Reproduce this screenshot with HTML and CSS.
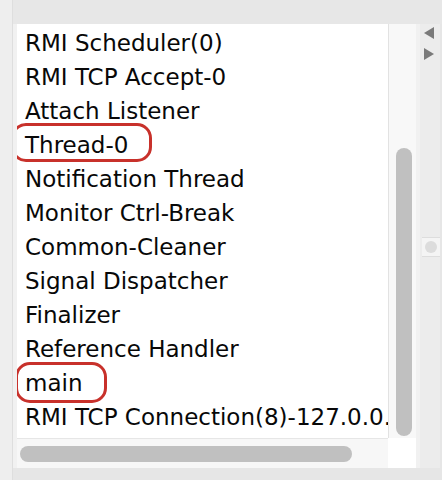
FILE: index.html
```html
<!DOCTYPE html>
<html>
<head>
<meta charset="utf-8">
<link rel="stylesheet" href="styles.css">
</head>
<body>
<div class="window">
  <div class="side"></div>
  <div class="main">
    <div class="topbar"></div>
    <div class="content">
      <div class="pane">
        <div class="viewport">
          <ul class="list">
            <li>RMI Scheduler(0)</li>
            <li>RMI TCP Accept-0</li>
            <li>Attach Listener</li>
            <li><span class="mark mark-thread">Thread-0</span></li>
            <li>Notification Thread</li>
            <li>Monitor Ctrl-Break</li>
            <li>Common-Cleaner</li>
            <li>Signal Dispatcher</li>
            <li>Finalizer</li>
            <li>Reference Handler</li>
            <li><span class="mark mark-main">main</span></li>
            <li>RMI TCP Connection(8)-127.0.0.1</li>
          </ul>
        </div>
        <div class="vbar"><div class="vthumb"></div></div>
        <div class="hbar"><div class="hthumb"></div></div>
        <div class="corner"></div>
      </div>
      <div class="rightcol">
        <div class="arrows">
          <svg width="12" height="14" viewBox="0 0 12 14"><polygon points="11,1 11,13 1,7" fill="#7a7a7a"/></svg>
          <svg width="12" height="14" viewBox="0 0 12 14"><polygon points="1,1 1,13 11,7" fill="#7a7a7a"/></svg>
        </div>
        <div class="knob"><span class="dot"></span></div>
      </div>
      <div class="edge"></div>
    </div>
    <div class="bottombar"></div>
  </div>
</div>
</body>
</html>
```
FILE: styles.css
```css
html, body {
  margin: 0;
  padding: 0;
}
body {
  width: 442px;
  height: 480px;
  overflow: hidden;
  background: #e8e8e8;
  font-family: "DejaVu Sans", "Liberation Sans", sans-serif;
}
.window {
  display: flex;
  width: 442px;
  height: 480px;
}
.side {
  width: 12px;
  background: #eeeeee;
  border-right: 1px solid #dedede;
  flex: none;
}
.main {
  flex: 1;
  display: flex;
  flex-direction: column;
}
.topbar {
  height: 24px;
  background: #e7e7e7;
  flex: none;
}
.content {
  display: flex;
  height: 444px;
  flex: none;
}
.pane {
  display: grid;
  grid-template-columns: 371px 28px;
  grid-template-rows: 414px 30px;
  padding-left: 4px;
  background: #f1f1f1;
  width: 403px;
  flex: none;
}
.viewport {
  background: #ffffff;
  overflow: hidden;
}
.list {
  list-style: none;
  margin: 0;
  padding: 2px 0 0 8px;
  white-space: nowrap;
  font-size: 23px;
  color: #080808;
}
.list li {
  height: 34px;
  line-height: 34px;
}
.mark {
  position: relative;
  display: inline-block;
}
.mark::after {
  content: "";
  position: absolute;
  box-sizing: border-box;
  border: 3px solid #c8312b;
  border-radius: 15px;
}
.mark-thread::after {
  left: -14px;
  width: 141px;
  top: -5px;
  bottom: 0;
}
.mark-main::after {
  left: -10px;
  width: 92px;
  top: -4px;
  bottom: -3px;
}
.vbar {
  background: #f8f8f8;
  border-left: 1px solid #e2e2e2;
  padding: 124px 4px 0 7px;
  box-sizing: border-box;
}
.vthumb {
  height: 288px;
  background: #c0c0c0;
  border-radius: 8px;
}
.hbar {
  background: #f7f7f7;
  border-top: 1px solid #e6e6e6;
  padding: 7px 36px 0 3px;
  box-sizing: border-box;
}
.hthumb {
  height: 16px;
  background: #c0c0c0;
  border-radius: 8px;
}
.corner {
  background: #ffffff;
}
.rightcol {
  width: 20px;
  background: #ececec;
  flex: none;
  display: flex;
  flex-direction: column;
}
.arrows {
  display: flex;
  flex-direction: column;
  gap: 7px;
  padding: 2px 0 0 3px;
}
.arrows svg {
  display: block;
}
.knob {
  margin-top: 176px;
  margin-left: 2px;
  width: 18px;
  height: 18px;
  background: #f4f4f4;
  border-top: 1px solid #dddddd;
  border-bottom: 1px solid #dddddd;
  display: flex;
  align-items: center;
  justify-content: center;
}
.dot {
  width: 12px;
  height: 12px;
  border-radius: 50%;
  background: #dcdcdc;
}
.edge {
  flex: 1;
  background: #e6e6e6;
}
.bottombar {
  flex: 1;
  background: #e6e6e6;
}
```
